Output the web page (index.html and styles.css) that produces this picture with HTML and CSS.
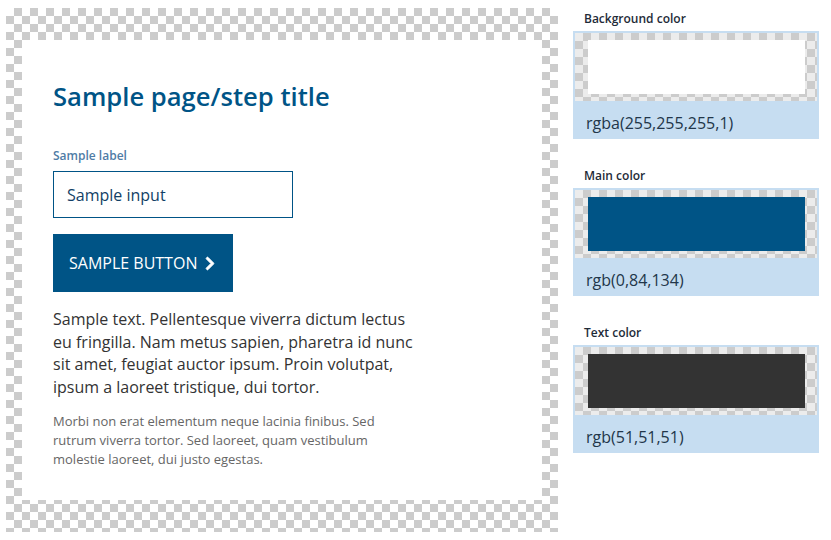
FILE: index.html
```html
<!DOCTYPE html>
<html lang="en">
<head>
    <meta charset="UTF-8">
    <meta name="viewport" content="width=device-width, initial-scale=1.0">
    <title>Theme preview</title>
    <link rel="stylesheet" href="styles.css">
</head>
<body>
    <div class="page">
        <section class="preview">
            <div class="panel">
                <h1 class="title">Sample page/step title</h1>
                <label class="field-label" for="sample-input">Sample label</label>
                <input class="field-input" type="text" id="sample-input" value="Sample input">
                <button class="btn">
                    Sample button
                    <svg class="chevron" viewBox="0 0 320 512" aria-hidden="true"><path d="M285.5 273L91.1 467.3c-9.4 9.4-24.6 9.4-33.9 0l-22.7-22.7c-9.4-9.4-9.4-24.5 0-33.9L188.5 256 34.5 101.3c-9.3-9.4-9.3-24.5 0-33.9l22.7-22.7c9.4-9.4 24.6-9.4 33.9 0L285.5 239c9.4 9.4 9.4 24.6 0 34z"/></svg>
                </button>
                <p class="lead">Sample text. Pellentesque viverra dictum lectus eu fringilla. Nam metus sapien, pharetra id nunc sit amet, feugiat auctor ipsum. Proin volutpat, ipsum a laoreet tristique, dui tortor.</p>
                <p class="small">Morbi non erat elementum neque lacinia finibus. Sed rutrum viverra tortor. Sed laoreet, quam vestibulum molestie laoreet, dui justo egestas.</p>
            </div>
        </section>

        <aside class="swatches">
            <div class="swatch">
                <div class="swatch-label">Background color</div>
                <div class="swatch-box">
                    <div class="swatch-check">
                        <div class="swatch-color color-bg"></div>
                    </div>
                    <div class="swatch-value">rgba(255,255,255,1)</div>
                </div>
            </div>
            <div class="swatch">
                <div class="swatch-label">Main color</div>
                <div class="swatch-box">
                    <div class="swatch-check">
                        <div class="swatch-color color-main"></div>
                    </div>
                    <div class="swatch-value">rgb(0,84,134)</div>
                </div>
            </div>
            <div class="swatch">
                <div class="swatch-label">Text color</div>
                <div class="swatch-box">
                    <div class="swatch-check">
                        <div class="swatch-color color-text"></div>
                    </div>
                    <div class="swatch-value">rgb(51,51,51)</div>
                </div>
            </div>
        </aside>
    </div>
</body>
</html>
```

FILE: styles.css
```css
body {
    margin: 0;
    padding: 0;
    background-color: #fff;
    font-family: "Open Sans", "Noto Sans", sans-serif;
    color: #333;
}

.page {
    display: flex;
    align-items: flex-start;
    gap: 15px;
    padding: 8px 0 0 6px;
}

/* left preview with transparent checker frame */
.preview {
    width: 552px;
    height: 524px;
    box-sizing: border-box;
    padding: 32px 16px;
    background: repeating-conic-gradient(#ccc 0 25%, #fff 0 50%) 0 0 / 16px 16px;
}

.panel {
    height: 100%;
    box-sizing: border-box;
    background-color: #fff;
    padding: 41px 31px;
}

.title {
    margin: 0 0 35px;
    font-size: 25.6px;
    line-height: 32px;
    font-weight: 600;
    color: rgb(0, 84, 134);
}

.field-label {
    display: block;
    margin-bottom: 7px;
    font-size: 12px;
    line-height: 16px;
    font-weight: 600;
    color: #4f7ca6;
}

.field-input {
    display: block;
    width: 240px;
    height: 47px;
    box-sizing: border-box;
    margin: 0 0 16px;
    padding: 0 13px;
    border: 1px solid rgb(0, 84, 134);
    border-radius: 0;
    font-family: inherit;
    font-size: 16px;
    color: #123f66;
    background-color: #fff;
}

.btn {
    display: flex;
    align-items: center;
    gap: 8px;
    padding: 18px 18px 18px 16px;
    border: none;
    border-radius: 0;
    background-color: rgb(0, 84, 134);
    color: #fff;
    font-family: inherit;
    font-size: 16px;
    line-height: 22px;
    text-transform: uppercase;
    cursor: pointer;
}

.chevron {
    width: 10px;
    height: 15px;
    fill: #fff;
    stroke: #fff;
    stroke-width: 28;
    stroke-linejoin: round;
}

.lead {
    width: 365px;
    margin: 16px 0 14px;
    font-size: 16px;
    line-height: 22.5px;
    color: #333;
}

.small {
    width: 335px;
    margin: 0;
    font-size: 13px;
    line-height: 19px;
    color: #666;
}

/* right column swatches */
.swatches {
    width: 246px;
    padding-top: 3px;
}

.swatch {
    margin-bottom: 29px;
}

.swatch-label {
    margin: 0 0 4px 11px;
    font-size: 12px;
    line-height: 16px;
    font-weight: 600;
    color: #1e2b38;
}

.swatch-box {
    height: 108px;
    box-sizing: border-box;
    padding: 2px 2px 0;
    background-color: #c6ddf1;
}

.swatch-check {
    height: 68px;
    box-sizing: border-box;
    padding: 7px 12px 7px 13px;
    background: repeating-conic-gradient(#ccc 0 25%, #ececec 0 50%) 0 0 / 16px 16px;
}

.swatch-color {
    height: 100%;
}

.color-bg {
    background-color: #fff;
}

.color-main {
    background-color: rgb(0, 84, 134);
}

.color-text {
    background-color: rgb(51, 51, 51);
}

.swatch-value {
    padding: 11px 0 0 11px;
    font-size: 16px;
    line-height: 22px;
    color: #22364a;
}
```
